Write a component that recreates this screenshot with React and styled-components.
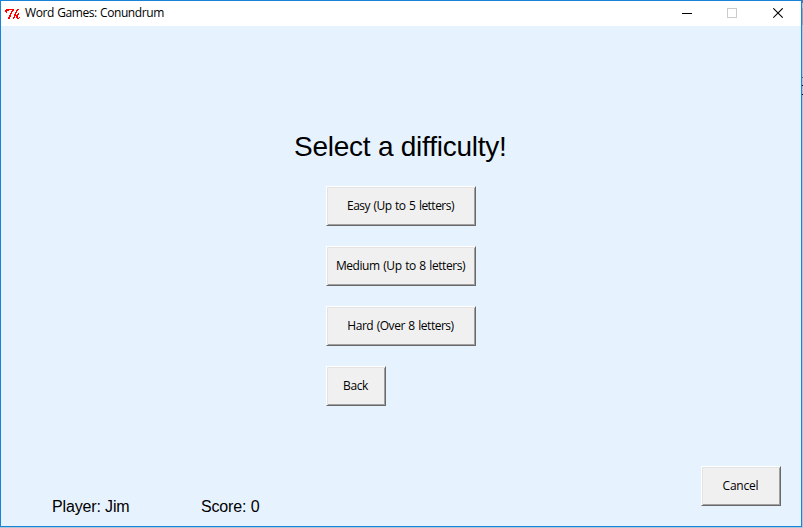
import React from 'react';
import styled, { createGlobalStyle } from 'styled-components';

const GlobalStyle = createGlobalStyle`
  html, body { margin: 0; padding: 0; overflow: hidden; }
  body { background: #b4bcc4; }
  * { box-sizing: border-box; }
`;

const Desktop = styled.div`
  width: 803px;
  height: 528px;
  padding: 0 1px 1px 0;
  background: linear-gradient(to bottom, #65758a 0 3px, #b4c4d2 3px 8px, #9aa5b0 8px 25px, #b4c4d2 25px 77px, #44688a 77px 78px, #b4c4d2 78px 85px, #000 85px 86px, #b4c4d2 86px 94px, #000 94px 95px, #b4c4d2 95px 100%);
`;

const Window = styled.main`
  width: 802px;
  height: 527px;
  display: flex;
  flex-direction: column;
  border: 1px solid #1883d7;
  background: #e6f3ff;
  color: #000;
  font-family: 'Open Sans', 'Noto Sans', sans-serif;
  font-size: 12px;
`;

const TitleBar = styled.header`
  height: 25px;
  flex: none;
  display: flex;
  align-items: center;
  padding-left: 4px;
  background: #fff;
`;

const Title = styled.span`
  flex: 1;
  margin-left: 5px;
  height: 25px;
  line-height: 23px;
  letter-spacing: -0.42px;
  word-spacing: 0.6px;
  white-space: nowrap;
`;

const Caption = styled.span`
  width: 45px;
  height: 25px;
  display: grid;
  place-items: center;

  &:last-child {
    padding-left: 2px;
  }
`;

const Controls = styled.div`
  display: flex;
  margin-right: 1px;
`;

const Body = styled.section`
  flex: 1;
  display: flex;
  flex-direction: column;
`;

const Heading = styled.h1`
  margin: 105px 0 0;
  padding-left: 293px;
  height: 32px;
  font: 400 28px/32px 'Liberation Sans', Arial, sans-serif;
  letter-spacing: -0.24px;
  white-space: nowrap;
`;

const Choices = styled.div`
  display: flex;
  flex-direction: column;
  gap: 20px;
  margin: 23px 0 0 325px;
`;

const Button = styled.button`
  width: ${(p) => p.$width}px;
  height: 40px;
  padding: 0 1px 1px 0;
  border: 1px solid;
  border-color: #fff #696969 #696969 #fff;
  box-shadow: inset 1px 1px #e3e3e3, inset -1px -1px #a0a0a0;
  background: #f0f0f0;
  color: #000;
  font: inherit;
  letter-spacing: ${(p) => p.$tracking || 0}px;
  word-spacing: 0.9px;
  white-space: nowrap;
`;

const Footer = styled.footer`
  display: flex;
  align-items: flex-end;
  margin-top: auto;
  padding: 0 20px 20px 51px;
`;

const Status = styled.span`
  width: ${(p) => p.$width}px;
  height: 20px;
  margin-bottom: -11px;
  font: 16px/20px 'Liberation Sans', Arial, sans-serif;
  letter-spacing: -0.15px;
  white-space: nowrap;
`;

const Spacer = styled.div`
  flex: 1;
`;

const TkIcon = () => (
  <svg width="15" height="12" viewBox="0 0 15 12" fill="none" stroke="#f00" shapeRendering="crispEdges">
    <path d="M1 1.5h8M0 2.5h4M7 2.5h2M0 3.5h2M6 3.5h2M1 4.5h1M6 4.5h1M5 5.5h2M5 6.5h1M4 7.5h2M4 8.5h2M3 9.5h2M3 10.5h2" />
    <path d="M12 1.5h2M11 2.5h2M11 3.5h1M10 4.5h2M10 5.5h1M13 5.5h1M9 6.5h2M12 6.5h2M9 7.5h4M9 8.5h1M11 8.5h2M8 9.5h2M11 9.5h2M14 9.5h1M8 10.5h1M12 10.5h2" />
  </svg>
);

const MinimizeIcon = () => (
  <svg width="11" height="11" stroke="#000" shapeRendering="crispEdges">
    <path d="M0 5.5h10" />
  </svg>
);

const MaximizeIcon = () => (
  <svg width="11" height="11" fill="none" stroke="#ccc" shapeRendering="crispEdges">
    <path d="M.5.5h9v9h-9z" />
  </svg>
);

const CloseIcon = () => (
  <svg width="11" height="11" stroke="#000" strokeWidth="1.1">
    <path d="M.3.3l9.4 9.4M9.7.3L.3 9.7" />
  </svg>
);

const difficulties = [
  { label: 'Easy (Up to 5 letters)', width: 150, tracking: -0.52 },
  { label: 'Medium (Up to 8 letters)', width: 150, tracking: -0.44 },
  { label: 'Hard (Over 8 letters)', width: 150, tracking: -0.48 },
  { label: 'Back', width: 60, tracking: -0.4 },
];

export default function App() {
  return (
    <>
      <GlobalStyle />
      <Desktop>
        <Window>
          <TitleBar>
            <TkIcon />
            <Title>Word Games: Conundrum</Title>
            <Controls>
              <Caption><MinimizeIcon /></Caption>
              <Caption><MaximizeIcon /></Caption>
              <Caption><CloseIcon /></Caption>
            </Controls>
          </TitleBar>
          <Body>
            <Heading>Select a difficulty!</Heading>
            <Choices>
              {difficulties.map((d) => (
                <Button key={d.label} $width={d.width} $tracking={d.tracking}>{d.label}</Button>
              ))}
            </Choices>
            <Footer>
              <Status $width={149}>Player: Jim</Status>
              <Status $width={70}>Score: 0</Status>
              <Spacer />
              <Button $width={80} $tracking={-0.2}>Cancel</Button>
            </Footer>
          </Body>
        </Window>
      </Desktop>
    </>
  );
}
